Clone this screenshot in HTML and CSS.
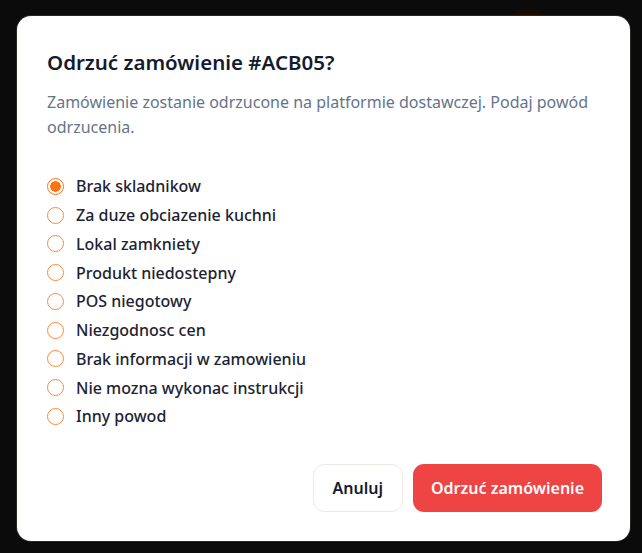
FILE: index.html
```html
<!DOCTYPE html>
<html lang="pl">
<head>
  <meta charset="UTF-8" />
  <title>Odrzuć zamówienie</title>
  <link rel="stylesheet" href="styles.css">
</head>
<body>

  <!-- tło pod nakładką -->
  <div class="backdrop">
    <div class="blob"></div>
  </div>

  <!-- Modal -->
  <div class="modal" role="dialog" aria-modal="true" aria-labelledby="modalTitle">
    <h2 class="modal-title" id="modalTitle">Odrzuć zamówienie #ACB05?</h2>
    <p class="modal-desc">Zamówienie zostanie odrzucone na platformie dostawczej. Podaj powód odrzucenia.</p>

    <div class="reasons">
      <label class="reason"><input type="radio" name="reason" checked><span>Brak skladnikow</span></label>
      <label class="reason"><input type="radio" name="reason"><span>Za duze obciazenie kuchni</span></label>
      <label class="reason"><input type="radio" name="reason"><span>Lokal zamkniety</span></label>
      <label class="reason"><input type="radio" name="reason"><span>Produkt niedostepny</span></label>
      <label class="reason"><input type="radio" name="reason"><span>POS niegotowy</span></label>
      <label class="reason"><input type="radio" name="reason"><span>Niezgodnosc cen</span></label>
      <label class="reason"><input type="radio" name="reason"><span>Brak informacji w zamowieniu</span></label>
      <label class="reason"><input type="radio" name="reason"><span>Nie mozna wykonac instrukcji</span></label>
      <label class="reason"><input type="radio" name="reason"><span>Inny powod</span></label>
    </div>

    <div class="modal-actions">
      <button class="btn btn-cancel">Anuluj</button>
      <button class="btn btn-reject">Odrzuć zamówienie</button>
    </div>
  </div>

</body>
</html>
```

FILE: styles.css
```css
* {
  box-sizing: border-box;
}

body {
  margin: 0;
  background: #0b0b0b;
  height: 553px;
  overflow: hidden;
  font-family: 'Noto Sans', 'Open Sans', sans-serif;
  padding: 16px 12px 12px 17px;
}

.backdrop {
  position: absolute;
  inset: 0;
  pointer-events: none;
}

.blob {
  position: absolute;
  top: 8px;
  left: 507px;
  width: 42px;
  height: 30px;
  border-radius: 50%;
  background: #150a04;
}

.modal {
  position: relative;
  width: 613px;
  height: 525px;
  background: #fff;
  border-radius: 14px;
  padding: 30px 28px 29px 30px;
  display: flex;
  flex-direction: column;
  box-shadow: 0 0 0 1px #2a2622;
}

.modal-title {
  margin: 0;
  font-size: 20.5px;
  line-height: 32px;
  font-weight: 600;
  color: #141b2d;
}

.modal-desc {
  margin: 12px 0 0 0;
  font-size: 16px;
  line-height: 25px;
  color: #64748b;
}

.reasons {
  margin-top: 32px;
  display: flex;
  flex-direction: column;
}

.reason {
  display: flex;
  align-items: center;
  gap: 12px;
  height: 28.75px;
  font-size: 16px;
  font-weight: 500;
  color: #1c2333;
  cursor: pointer;
}

.reason input {
  appearance: none;
  -webkit-appearance: none;
  margin: 0 0 0 0;
  width: 17px;
  height: 17px;
  border: 1.5px solid #f98a3c;
  border-radius: 50%;
  background: #fff;
  flex-shrink: 0;
}

.reason input:checked {
  background: radial-gradient(circle, #f97316 0 5px, #fff 5.5px);
  border-color: #f97316;
}

.modal-actions {
  margin-top: auto;
  display: flex;
  justify-content: flex-end;
  gap: 10px;
}

.btn {
  height: 48px;
  border-radius: 11px;
  font-family: inherit;
  font-size: 16px;
  font-weight: 600;
  cursor: pointer;
}

.btn-cancel {
  background: #fff;
  color: #141b2d;
  border: 1px solid #ece9e4;
  padding: 0 19px;
}

.btn-reject {
  background: #ef4444;
  color: #fff;
  border: none;
  padding: 0 18px;
}
```
